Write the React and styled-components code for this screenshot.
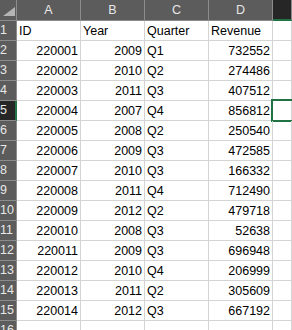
import React from "react";
import styled, { createGlobalStyle, css } from "styled-components";

const Global = createGlobalStyle`
  html, body { margin: 0; padding: 0; background: #ffffff; overflow: hidden; }
  body { font-family: "Liberation Sans", Arial, sans-serif; }
`;

const GREEN = "#217346";

const Sheet = styled.div`
  display: grid;
  grid-template-columns: 17px 64px 64px 64px 64px 1fr;
  grid-auto-rows: 20px;
  grid-template-rows: 21px;
  width: 292px;
  height: 330px;
  overflow: hidden;
  font-size: 12.5px;
  color: #000;
`;

const Corner = styled.div`
  position: relative;
  background: #5c5c5c;
  border-right: 1px solid #8c8c8c;
  border-bottom: 1px solid #8c8c8c;
  box-sizing: border-box;
  svg { position: absolute; left: 3px; top: 7px; }
`;

const ColHead = styled.div`
  box-sizing: border-box;
  background: ${(p) => (p.$active ? "#262626" : "#5c5c5c")};
  border-right: 1px solid #8c8c8c;
  border-bottom: ${(p) => (p.$active ? `2px solid ${GREEN}` : "1px solid #8c8c8c")};
  color: #e8e8e8;
  display: flex;
  align-items: center;
  justify-content: center;
  line-height: 20px;
  padding-bottom: 1px;
`;

const RowHead = styled.div`
  box-sizing: border-box;
  background: ${(p) => (p.$active ? "#262626" : "#5c5c5c")};
  border-right: ${(p) => (p.$active ? `2px solid ${GREEN}` : "1px solid #8c8c8c")};
  border-bottom: 1px solid #8c8c8c;
  color: #e8e8e8;
  display: flex;
  align-items: center;
  padding-left: 0px;
  line-height: 19px;
  white-space: nowrap;
  overflow: hidden;
`;

const Cell = styled.div`
  position: relative;
  box-sizing: border-box;
  border-right: 1px solid #d4d4d4;
  border-bottom: 1px solid #d4d4d4;
  display: flex;
  align-items: flex-end;
  justify-content: ${(p) => (p.$num ? "flex-end" : "flex-start")};
  padding: 0 2px 1px 2px;
  line-height: 15px;
  white-space: nowrap;
  ${(p) =>
    p.$selected &&
    css`
      &::after {
        content: "";
        position: absolute;
        left: -2px;
        top: -2px;
        right: -4px;
        bottom: -2px;
        border: 2px solid ${GREEN};
      }
    `}
`;

const data = [
  ["220001", "2009", "Q1", "732552"],
  ["220002", "2010", "Q2", "274486"],
  ["220003", "2011", "Q3", "407512"],
  ["220004", "2007", "Q4", "856812"],
  ["220005", "2008", "Q2", "250540"],
  ["220006", "2009", "Q3", "472585"],
  ["220007", "2010", "Q3", "166332"],
  ["220008", "2011", "Q4", "712490"],
  ["220009", "2012", "Q2", "479718"],
  ["220010", "2008", "Q3", "52638"],
  ["220011", "2009", "Q3", "696948"],
  ["220012", "2010", "Q4", "206999"],
  ["220013", "2011", "Q2", "305609"],
  ["220014", "2012", "Q3", "667192"],
];

const cols = ["A", "B", "C", "D", ""];

export default function App() {
  const rows = [["ID", "Year", "Quarter", "Revenue"], ...data, ["", "", "", ""]];
  return (
    <>
      <Global />
      <Sheet>
        <Corner>
          <svg width="12" height="9" viewBox="0 0 12 9">
            <polygon points="12,0 12,9 0,9" fill="#b5b5b5" />
          </svg>
        </Corner>
        {cols.map((c, i) => (
          <ColHead key={i} $active={i === 4}>{c}</ColHead>
        ))}
        {rows.map((r, ri) => (
          <React.Fragment key={ri}>
            <RowHead $active={ri === 4}>{ri + 1}</RowHead>
            {r.map((v, ci) => (
              <Cell key={ci} $num={ri > 0 && ci !== 2}>{v}</Cell>
            ))}
            <Cell $selected={ri === 4} />
          </React.Fragment>
        ))}
      </Sheet>
    </>
  );
}
